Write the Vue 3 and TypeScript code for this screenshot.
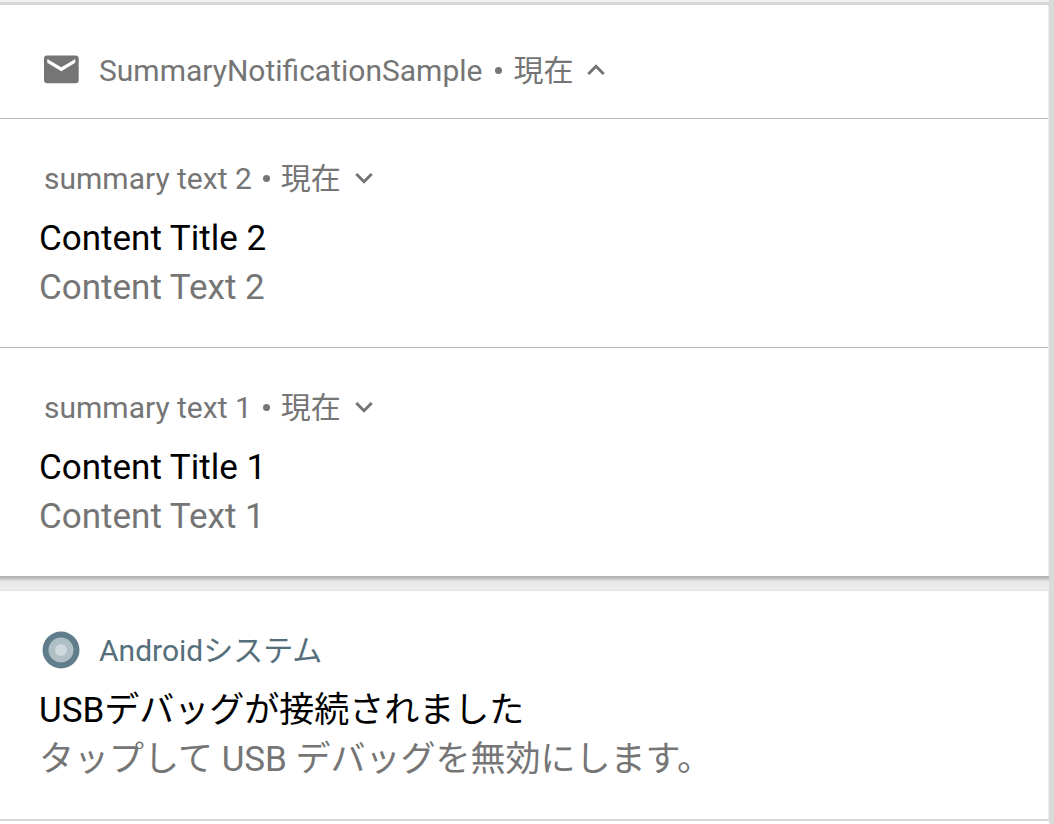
<script setup lang="ts">
import { ref } from 'vue'

interface Child {
  id: number
  summary: string
  title: string
  text: string
}

const time = '現在'
const groupOpen = ref(true)
const openId = ref<number | null>(null)

const children: Child[] = [
  { id: 2, summary: 'summary text 2', title: 'Content Title 2', text: 'Content Text 2' },
  { id: 1, summary: 'summary text 1', title: 'Content Title 1', text: 'Content Text 1' },
]

function toggleChild(id: number): void {
  openId.value = openId.value === id ? null : id
}
</script>

<template>
  <main class="shade" lang="ja">
    <div class="previous"></div>

    <section class="card group">
      <header class="meta group-head">
        <svg class="icon" viewBox="0 0 38 38" aria-hidden="true">
          <rect x="2" y="4.400" width="34.700" height="27.800" rx="3.200" fill="#757575" />
          <path d="M5.300 8 L19.300 16.300 L33.300 8 V11.800 L19.300 20.200 L5.300 11.800 Z" fill="#fff" />
        </svg>
        <span class="label">SummaryNotificationSample</span>
        <span class="dot"></span>
        <span class="time">{{ time }}</span>
        <button
          class="expand"
          type="button"
          aria-label="折りたたむ"
          :aria-expanded="groupOpen"
          @click="groupOpen = !groupOpen"
        >
          <svg :class="{ up: groupOpen }" viewBox="0 0 20 20" aria-hidden="true">
            <path d="M2.300 6 L10 13.700 L17.700 6" />
          </svg>
        </button>
      </header>

      <template v-if="groupOpen">
        <article v-for="c in children" :key="c.id" class="child">
          <header class="meta child-head">
            <span class="label">{{ c.summary }}</span>
            <span class="dot"></span>
            <span class="time">{{ time }}</span>
            <button
              class="expand"
              type="button"
              aria-label="展開"
              :aria-expanded="openId === c.id"
              @click="toggleChild(c.id)"
            >
              <svg :class="{ up: openId === c.id }" viewBox="0 0 20 20" aria-hidden="true">
                <path d="M2.300 6 L10 13.700 L17.700 6" />
              </svg>
            </button>
          </header>
          <h2 class="title">{{ c.title }}</h2>
          <p class="text">{{ c.text }}</p>
        </article>
      </template>
    </section>

    <div class="gap"></div>

    <section class="card system">
      <header class="meta system-head">
        <svg class="icon" viewBox="0 0 38 38" aria-hidden="true">
          <circle cx="19" cy="19" r="18.500" fill="#607d8b" />
          <circle cx="19" cy="19" r="12.500" fill="#b0bec5" />
          <circle cx="19" cy="19" r="6" fill="#cfd8dc" />
        </svg>
        <span class="label">Androidシステム</span>
      </header>
      <h2 class="title">USBデバッグが接続されました</h2>
      <p class="text">タップして USB デバッグを無効にします。</p>
    </section>
  </main>
</template>

<style>
body {
  margin: 0;
  background: #fff;
}
</style>

<style scoped>
.shade {
  box-sizing: border-box;
  min-height: 100vh;
  border-right: 5px solid #dadada;
  background: #fff;
  font-family: Roboto, 'Noto Sans CJK JP', sans-serif;
  color: #757575;
}

.previous {
  height: 2px;
  border-bottom: 3px solid #d6d6d6;
  background: #f0f0f0;
}

.card {
  border-right: 1px solid #eee;
  background: #fff;
}

.gap {
  height: 15px;
  background: linear-gradient(#b0b0b0, #b8b8b8 2px, #dadada 4px, #e8e8e8 6px, #ededed 13px, #e0e0e0);
}

.meta {
  display: flex;
  align-items: center;
  height: 40px;
  font-size: 30px;
  line-height: 40px;
}

.group-head {
  padding: 45px 42px 28px;
}

.label,
.time {
  padding-top: 2px;
}

.icon {
  width: 38px;
  height: 38px;
  margin-right: 19px;
}

.dot {
  width: 7px;
  height: 7px;
  margin: 0 11px;
  border-radius: 50%;
  background: #757575;
}

.group-head .dot {
  margin-left: 13px;
}

.expand {
  display: flex;
  margin: 0 0 0 13px;
  padding: 0;
  border: 0;
  background: none;
  cursor: pointer;
}

.expand svg {
  width: 20px;
  height: 20px;
  fill: none;
  stroke: #757575;
  stroke-width: 3;
}

.expand .up {
  transform: rotate(180deg);
}

.child {
  padding: 39px 39px 35px;
  border-top: 1px solid #b8b8b8;
}

.child-head {
  padding: 0 5px;
}

.title,
.text {
  margin: 0;
  font-size: 35px;
  font-weight: 400;
  line-height: 49px;
}

.title {
  margin-top: 16px;
  color: #000;
}

.system {
  padding: 39px 39px 35px;
  border-bottom: 2px solid #d6d6d6;
}

.system-head {
  padding: 0 3px;
  color: #546e7a;
}
</style>
